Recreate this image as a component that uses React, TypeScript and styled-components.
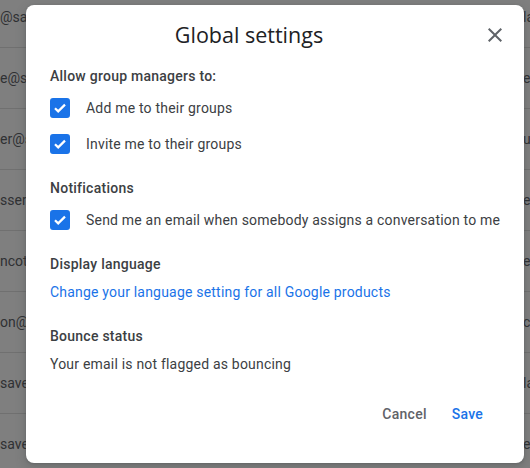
import React, { useState } from 'react'
import styled, { createGlobalStyle } from 'styled-components'

const GlobalStyle = createGlobalStyle`
  html, body {
    margin: 0;
    padding: 0;
    width: 530px;
    height: 468px;
    overflow: hidden;
    background: #fff;
    font-family: Roboto, "Liberation Sans", sans-serif;
  }
`

const backgroundRows = [
  { left: '@savemail.com', right: 'lacey' },
  { left: 'e@savemail.com', right: 'ed' },
  { left: 'er@savemail.com', right: 'user' },
  { left: 'sserman@savemail.com', right: 'ed' },
  { left: 'ncott@savemail.com', right: 'ed' },
  { left: 'on@savemail.com', right: 'cole' },
  { left: 'savemail.com', right: 'lacey' },
  { left: 'savemail.com', right: 'ed' },
]

const Page = styled.div`
  position: relative;
  width: 530px;
  height: 468px;
  overflow: hidden;
`

const MemberTable = styled.div`
  margin-top: -13px;
`

const MemberRow = styled.div`
  display: grid;
  grid-template-columns: 1fr 7px;
  align-items: center;
  height: 61px;
  border-bottom: 1px solid #e0e0e0;
  box-sizing: border-box;
  font-size: 14px;
  color: #5f6368;
  white-space: nowrap;
`

const MemberCell = styled.div`
  overflow: hidden;
`

const Scrim = styled.div`
  position: absolute;
  inset: 0;
  background: rgba(0, 0, 0, 0.5);
  display: flex;
  align-items: flex-start;
  padding: 5px 6px 5px 26px;
  box-sizing: border-box;
`

const Dialog = styled.div`
  width: 498px;
  height: 458px;
  background: #fff;
  border-radius: 8px;
  box-shadow: 0 1px 3px rgba(60, 64, 67, 0.3), 0 4px 8px 3px rgba(60, 64, 67, 0.15);
  display: flex;
  flex-direction: column;
  box-sizing: border-box;
`

const Header = styled.div`
  display: flex;
  align-items: center;
  height: 54px;
  padding: 5px 9px 0 24px;
  box-sizing: border-box;
`

const Title = styled.h2`
  flex: 1;
  margin: 0;
  text-align: center;
  font-family: "Open Sans", Roboto, sans-serif;
  font-size: 21.5px;
  font-weight: 400;
  color: #202124;
  padding-right: 27px;
`

const CloseButton = styled.button`
  width: 40px;
  height: 40px;
  border: none;
  background: none;
  padding: 0;
  display: flex;
  align-items: center;
  justify-content: center;
  cursor: pointer;
  color: #5f6368;
`

const Body = styled.div`
  padding: 7px 16px 0 24px;
  letter-spacing: 0.2px;
`

const Section = styled.section<{ first?: boolean }>`
  margin-top: ${(p) => (p.first ? 0 : 16)}px;
`

const Heading = styled.div`
  font-size: 14px;
  font-weight: 500;
  line-height: 20px;
  color: #3c4043;
  letter-spacing: 0.25px;
`

const OptionList = styled.div`
  margin-top: 4px;
`

const OptionRow = styled.label`
  display: flex;
  align-items: center;
  height: 36px;
  gap: 16px;
  font-size: 14px;
  color: #3c4043;
  white-space: nowrap;
  cursor: pointer;
`

const Box = styled.span<{ checked: boolean }>`
  width: 20px;
  height: 20px;
  border-radius: 3px;
  box-sizing: border-box;
  background: ${(p) => (p.checked ? '#1a73e8' : '#fff')};
  border: 2px solid ${(p) => (p.checked ? '#1a73e8' : '#5f6368')};
  display: flex;
  align-items: center;
  justify-content: center;
  flex-shrink: 0;
`

const TextRow = styled.div`
  display: flex;
  align-items: center;
  height: 36px;
  font-size: 14px;
  color: #3c4043;
  white-space: nowrap;
`

const Link = styled.a`
  color: #1a73e8;
  text-decoration: none;
  cursor: pointer;
`

const Actions = styled.div`
  margin-top: auto;
  display: flex;
  justify-content: flex-end;
  gap: 9px;
  padding: 0 33px 31px 0;
`

const TextButton = styled.button<{ primary?: boolean }>`
  height: 36px;
  padding: 0 8px;
  border: none;
  background: none;
  font-family: Roboto, sans-serif;
  font-size: 14px;
  font-weight: 500;
  letter-spacing: 0.25px;
  color: ${(p) => (p.primary ? '#1a73e8' : '#5f6368')};
  cursor: pointer;
`

function Checkbox({ checked }: { checked: boolean }) {
  return (
    <Box checked={checked}>
      {checked && (
        <svg width="16" height="16" viewBox="0 0 16 16">
          <path d="M3 8.2l3.2 3.2L13 4.6" fill="none" stroke="#fff" strokeWidth="2.2" />
        </svg>
      )}
    </Box>
  )
}

function Option({ label, checked, onToggle }: { label: string; checked: boolean; onToggle: () => void }) {
  return (
    <OptionRow onClick={onToggle}>
      <Checkbox checked={checked} />
      <span>{label}</span>
    </OptionRow>
  )
}

export default function App() {
  const [opts, setOpts] = useState({ add: true, invite: true, email: true })
  const toggle = (k: keyof typeof opts) => setOpts((o) => ({ ...o, [k]: !o[k] }))

  return (
    <Page>
      <GlobalStyle />
      <MemberTable>
        {backgroundRows.map((r, i) => (
          <MemberRow key={i}>
            <MemberCell>{r.left}</MemberCell>
            <MemberCell>{r.right}</MemberCell>
          </MemberRow>
        ))}
      </MemberTable>
      <Scrim>
        <Dialog>
          <Header>
            <Title>Global settings</Title>
            <CloseButton aria-label="Close">
              <svg width="24" height="24" viewBox="0 0 24 24" fill="currentColor">
                <path d="M19 6.41L17.59 5 12 10.59 6.41 5 5 6.41 10.59 12 5 17.59 6.41 19 12 13.41 17.59 19 19 17.59 13.41 12z" />
              </svg>
            </CloseButton>
          </Header>
          <Body>
            <Section first>
              <Heading>Allow group managers to:</Heading>
              <OptionList>
                <Option label="Add me to their groups" checked={opts.add} onToggle={() => toggle('add')} />
                <Option label="Invite me to their groups" checked={opts.invite} onToggle={() => toggle('invite')} />
              </OptionList>
            </Section>
            <Section>
              <Heading>Notifications</Heading>
              <OptionList>
                <Option
                  label="Send me an email when somebody assigns a conversation to me"
                  checked={opts.email}
                  onToggle={() => toggle('email')}
                />
              </OptionList>
            </Section>
            <Section>
              <Heading>Display language</Heading>
              <TextRow>
                <Link>Change your language setting for all Google products</Link>
              </TextRow>
            </Section>
            <Section>
              <Heading>Bounce status</Heading>
              <TextRow>Your email is not flagged as bouncing</TextRow>
            </Section>
          </Body>
          <Actions>
            <TextButton>Cancel</TextButton>
            <TextButton primary>Save</TextButton>
          </Actions>
        </Dialog>
      </Scrim>
    </Page>
  )
}
